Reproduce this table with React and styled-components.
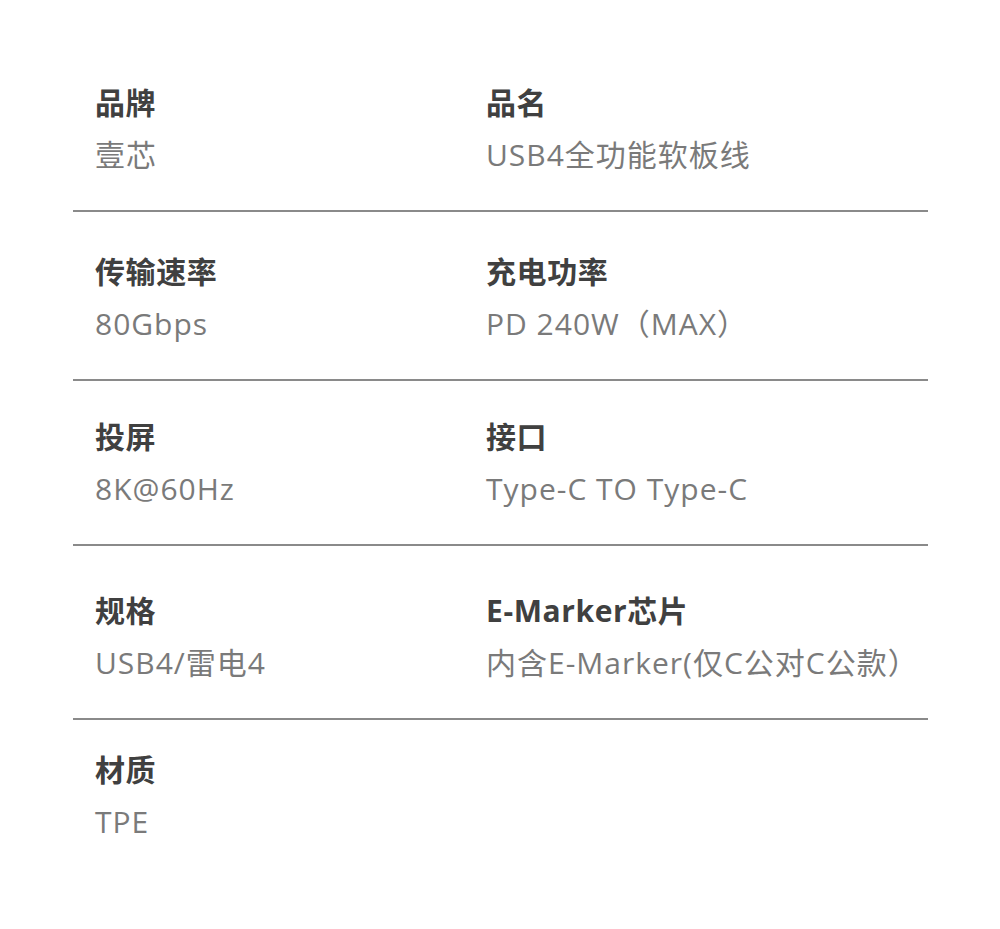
import React from "react";
import styled, { createGlobalStyle } from "styled-components";

const Global = createGlobalStyle`
  html, body { margin: 0; padding: 0; background: #fff; }
  body { font-family: "Open Sans", "Noto Sans CJK SC", sans-serif; }
`;

const Page = styled.div`
  width: 1000px;
  min-height: 929px;
  background: #fff;
  padding: 0 72px 0 73px;
  box-sizing: border-box;
`;

const Row = styled.div`
  display: grid;
  grid-template-columns: 391px 1fr;
  padding: ${(p) => p.$top}px 0 35px 22px;
  border-bottom: ${(p) => (p.$last ? "none" : "2px solid #8a8a8a")};
`;

const Cell = styled.div`
  display: flex;
  flex-direction: column;
  gap: 12px;
`;

const Label = styled.div`
  font-family: "Open Sans", "Noto Sans CJK SC", sans-serif;
  font-size: 30px;
  line-height: 40px;
  font-weight: 700;
  letter-spacing: 0.6px;
  color: #404040;
  white-space: nowrap;
`;

const Value = styled.div`
  font-family: "Open Sans", "Noto Sans CJK SC", sans-serif;
  font-size: 30px;
  line-height: 40px;
  font-weight: 400;
  letter-spacing: 1px;
  color: #7a7a7a;
  white-space: nowrap;
`;

const rows = [
  { top: 83, items: [["品牌", "壹芯"], ["品名", "USB4全功能软板线"]] },
  { top: 40, items: [["传输速率", "80Gbps"], ["充电功率", "PD 240W（MAX）"]] },
  { top: 36, items: [["投屏", "8K@60Hz"], ["接口", "Type-C TO Type-C"]] },
  { top: 45, items: [["规格", "USB4/雷电4"], ["E-Marker芯片", "内含E-Marker(仅C公对C公款）"]] },
  { top: 30, items: [["材质", "TPE"]], last: true },
];

export default function App() {
  return (
    <>
      <Global />
      <Page>
        {rows.map((r, i) => (
          <Row key={i} $top={r.top} $last={r.last}>
            {r.items.map(([l, v]) => (
              <Cell key={l}>
                <Label>{l}</Label>
                <Value>{v}</Value>
              </Cell>
            ))}
          </Row>
        ))}
      </Page>
    </>
  );
}
